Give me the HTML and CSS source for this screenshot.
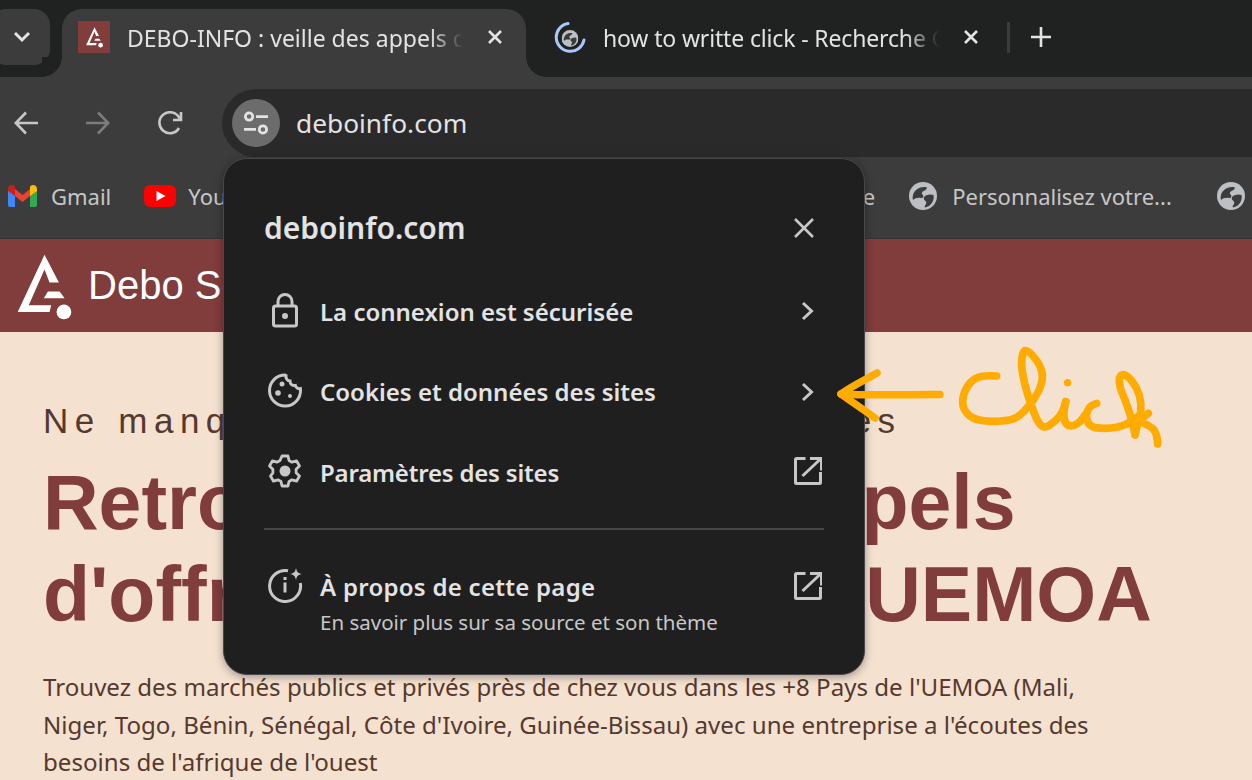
FILE: index.html
```html
<!DOCTYPE html>
<html lang="fr">
<head>
  <meta charset="UTF-8">
  <meta name="viewport" content="width=device-width, initial-scale=1.0">
  <title>DEBO-INFO</title>
  <link rel="stylesheet" href="styles.css">
</head>
<body>
<svg class="sprite" width="0" height="0">
  <symbol id="globe" viewBox="0 0 28 28">
    <circle cx="14" cy="14" r="14" fill="#bcbfc4"/>
    <path d="M18 5.500C12 4 6 7 4 13c-.5 2-.5 3.500 0 5 2-2 5-2.500 8-2 2.500 0 3-2 1.500-3.500-1.500-1.500 0-3 2-4 1.500-.5 2.500-2 2.500-3.500z" fill="#3c3c3c"/>
    <path d="M24.500 13c-2-1-5-.5-7.500.5-2.500 1-3 3.500-1 5 2 1.500 1.500 3.500 0 5-.5.500-.5 1.500 0 2 3-.5 6-2.500 7.500-5.500 1.200-2.500 1.500-4.500 1-7z" fill="#3c3c3c"/>
  </symbol>
  <symbol id="ext" viewBox="0 0 28 28">
    <path d="M11.500 1.500H2.500a1 1 0 0 0-1 1v23a1 1 0 0 0 1 1h23a1 1 0 0 0 1-1V15" fill="none" stroke="#c7c7c7" stroke-width="3"/>
    <path d="M16 1.500h11.500V13.500M27 1.500L8.500 19" fill="none" stroke="#c7c7c7" stroke-width="3"/>
  </symbol>
  <symbol id="chev" viewBox="0 0 13 20">
    <path d="M2 2l8.500 8L2 18" fill="none" stroke="#c7c7c7" stroke-width="3"/>
  </symbol>
  <symbol id="logo" viewBox="50 40 170 200">
    <path d="M135 42L178 125H150L135 86L88 193H155L150 213H55Z" fill="#fff"/>
    <path d="M145 152H180L195 172H133Z" fill="#fff"/>
    <circle cx="193" cy="213" r="22" fill="#fff"/>
  </symbol>
</svg>

<div class="tabstrip">
  <div class="tab-search">
    <svg width="18" height="12" viewBox="0 0 18 12"><path d="M2 2l7 7 7-7" fill="none" stroke="#e3e3e3" stroke-width="3"/></svg>
  </div>
  <div class="tab tab-active">
    <div class="favicon"><svg width="19" height="21"><use href="#logo"/></svg></div>
    <span class="tab-title">DEBO-INFO : veille des appels d'offres</span>
    <svg class="tab-close" width="16" height="16" viewBox="0 0 16 16"><path d="M2 2l12 12M14 2L2 14" stroke="#e3e3e3" stroke-width="2.600"/></svg>
  </div>
  <div class="tab tab-other">
    <svg class="spinner" width="32" height="32" viewBox="0 0 32 32">
      <path d="M14 2.500A14 14 0 1 0 30 19" fill="none" stroke="#a8c7fa" stroke-width="3" stroke-linecap="round"/>
      <svg x="7.500" y="9" width="17" height="17"><use href="#globe"/></svg>
    </svg>
    <span class="tab-title">how to writte click - Recherche Google</span>
    <svg class="tab-close" width="16" height="16" viewBox="0 0 16 16"><path d="M2 2l12 12M14 2L2 14" stroke="#e3e3e3" stroke-width="2.600"/></svg>
  </div>
  <div class="tab-sep"></div>
  <svg class="tab-new" width="22" height="22" viewBox="0 0 22 22"><path d="M11 1v20M1 11h20" stroke="#e3e3e3" stroke-width="2.600"/></svg>
</div>

<div class="toolbar">
  <div class="nav">
    <svg width="24" height="24" viewBox="0 0 24 24"><path d="M24 12H2M12 1.500L1.800 12 12 22.500" fill="none" stroke="#c7c7c7" stroke-width="2.600"/></svg>
    <svg width="24" height="24" viewBox="0 0 24 24"><path d="M0 12h22M12 1.500L22.200 12 12 22.500" fill="none" stroke="#7c7c7c" stroke-width="2.600"/></svg>
    <svg width="26" height="24" viewBox="0 0 26 24"><path d="M21 17a10.500 10.500 0 1 1 .5-9.500M23 1v8h-8" fill="none" stroke="#c7c7c7" stroke-width="2.600"/></svg>
  </div>
  <div class="omnibox">
    <div class="site-info">
      <svg width="24" height="24" viewBox="0 0 26 26">
        <circle cx="5.500" cy="6" r="4" fill="none" stroke="#e3e3e3" stroke-width="3"/>
        <path d="M13 6h13M0 20h13" stroke="#e3e3e3" stroke-width="3"/>
        <circle cx="20.500" cy="20" r="4" fill="none" stroke="#e3e3e3" stroke-width="3"/>
      </svg>
    </div>
    <span class="url">deboinfo.com</span>
  </div>
</div>

<div class="bookmarks">
  <div class="bookmark bm-gmail">
    <svg width="29" height="22" viewBox="0 0 29 22">
      <path d="M0 4v16a2 2 0 0 0 2 2h5V10z" fill="#4285f4"/>
      <path d="M29 4v16a2 2 0 0 1-2 2h-5V10z" fill="#34a853"/>
      <path d="M7 4l7.500 6L22 4v7l-7.500 6L7 11z" fill="#ea4335"/>
      <path d="M0 4c0-3.500 4-5 6.500-3L7 1.500V11L0 6z" fill="#c5221f"/>
      <path d="M29 4c0-3.500-4-5-6.500-3L22 1.500V11l7-5z" fill="#fbbc04"/>
    </svg>
    <span>Gmail</span>
  </div>
  <div class="bookmark bm-youtube">
    <svg width="32" height="22" viewBox="0 0 32 22">
      <rect width="32" height="22" rx="6" fill="#ff0000"/>
      <path d="M12.500 6l9 5-9 5z" fill="#fff"/>
    </svg>
    <span>YouTube</span>
  </div>
  <div class="bookmark bm-middle">
    <span>Maps et plus encore</span>
  </div>
  <div class="bookmark bm-perso">
    <svg width="28" height="28"><use href="#globe"/></svg>
    <span>Personnalisez votre...</span>
  </div>
  <div class="bookmark bm-last">
    <svg width="28" height="28"><use href="#globe"/></svg>
  </div>
</div>

<header class="site-header">
  <svg class="site-logo" width="57" height="67"><use href="#logo"/></svg>
  <span class="site-name">Debo Sourcing</span>
</header>

<main class="hero">
  <p class="eyebrow">Ne manquez plus aucune des annonces</p>
  <h1 class="hero-title"><span class="line-one">Retrouvez tous vos appels</span><br><span class="line-two">d'offres dans la zone UEMOA</span></h1>
  <p class="hero-text">Trouvez des marchés publics et privés près de chez vous dans les +8 Pays de l'UEMOA (Mali, Niger, Togo, Bénin, Sénégal, Côte d'Ivoire, Guinée-Bissau) avec une entreprise a l'écoutes des besoins de l'afrique de l'ouest</p>
</main>

<section class="popup">
  <div class="popup-head">
    <span class="popup-host">deboinfo.com</span>
    <svg width="22" height="22" viewBox="0 0 22 22"><path d="M2 2l18 18M20 2L2 20" stroke="#c7c7c7" stroke-width="2.600"/></svg>
  </div>
  <div class="popup-row">
    <svg class="row-icon" width="36" height="36" viewBox="0 0 36 36">
      <path d="M11 15V9.500a7 7 0 0 1 14 0V15" fill="none" stroke="#c7c7c7" stroke-width="3"/>
      <rect x="6.500" y="14" width="23" height="20" rx="2" fill="none" stroke="#c7c7c7" stroke-width="3"/>
      <circle cx="18" cy="24" r="3" fill="#c7c7c7"/>
    </svg>
    <span class="row-label">La connexion est sécurisée</span>
    <svg class="row-chev" width="13" height="20"><use href="#chev"/></svg>
  </div>
  <div class="popup-row">
    <svg class="row-icon" width="36" height="36" viewBox="0 0 36 36">
      <path d="M18 3A15.500 15.500 0 1 0 33.500 18c0-.5 0-1-.1-1.500-2 .5-4.400-.5-5-3-3 .5-5.400-1.500-5.400-4.500-2.500 0-4.500-2.500-4-5.500z" fill="none" stroke="#c7c7c7" stroke-width="3"/>
      <circle cx="15" cy="12" r="2.500" fill="#c7c7c7"/>
      <circle cx="11" cy="21" r="2.800" fill="#c7c7c7"/>
      <circle cx="23" cy="24" r="2" fill="#c7c7c7"/>
    </svg>
    <span class="row-label">Cookies et données des sites</span>
    <svg class="row-chev" width="13" height="20"><use href="#chev"/></svg>
  </div>
  <div class="popup-row">
    <svg class="row-icon" width="36" height="36" viewBox="0 0 36 36">
      <path d="M15 3h6l1 4.500 3 1.700 4.500-1.400 3 5.200-3.400 3.200v3.600l3.400 3.200-3 5.200-4.500-1.400-3 1.700-1 4.500h-6l-1-4.500-3-1.700-4.500 1.400-3-5.200L5.900 19.800v-3.600L2.500 13l3-5.200L10 9.200l3-1.700z" fill="none" stroke="#c7c7c7" stroke-width="2.800" stroke-linejoin="round"/>
      <circle cx="18" cy="18" r="5.500" fill="#c7c7c7"/>
    </svg>
    <span class="row-label label-tight">Paramètres des sites</span>
    <svg class="row-ext" width="28" height="28"><use href="#ext"/></svg>
  </div>
  <div class="popup-divider"></div>
  <div class="popup-row popup-row-about">
    <svg class="row-icon" width="36" height="36" viewBox="0 0 36 36">
      <path d="M21 3.800A15.500 15.500 0 1 0 33.300 16" fill="none" stroke="#c7c7c7" stroke-width="3"/>
      <path d="M18 15.500v10M18 10v3" stroke="#c7c7c7" stroke-width="3"/>
      <path d="M29 1c.8 4 2 5.200 6 6-4 .8-5.200 2-6 6-.8-4-2-5.200-6-6 4-.8 5.200-2 6-6z" fill="#c7c7c7"/>
    </svg>
    <div class="row-text">
      <span class="row-label">À propos de cette page</span>
      <span class="row-sub">En savoir plus sur sa source et son thème</span>
    </div>
    <svg class="row-ext" width="28" height="28"><use href="#ext"/></svg>
  </div>
</section>

<svg class="scribble" width="1252" height="780" viewBox="0 0 1252 780">
  <g fill="none" stroke="#ffab00" stroke-width="7.500" stroke-linecap="round" stroke-linejoin="round">
    <path d="M940 394.500C910 394 875 396 841 394"/>
    <path d="M877 373C865 380 852 386 841 394C852 402 864 410 875 418"/>
  </g>
  <g transform="translate(950 340) scale(.3333)" fill="none" stroke="#ffab00" stroke-width="23" stroke-linecap="round" stroke-linejoin="round">
    <path d="M140 108Q95 105 77.500 115Q60 125 49 145Q38 165 38 185Q38 205 51.500 220Q65 235 87.500 240Q110 245 140 244Q170 243 187.500 237.500Q205 232 222.500 213.500Q240 195 255 172.500Q270 150 275 127.500Q280 105 272.500 85Q265 65 245 43.500Q225 22 218.500 41Q212 60 217 95Q222 130 233.500 165Q245 200 255 225Q265 250 275 257.500Q285 265 300 255Q315 245 327.500 230Q340 215 347 185"/>
    <path d="M347 185Q338 225 345 245Q352 262 372 256Q390 250 405 225"/>
    <path d="M440 190Q412 198 409 225Q408 255 435 263Q490 270 530 252L560 232"/>
    <path d="M555 285Q548 240 525 180Q505 135 508 115Q518 90 545 122Q578 165 572 215L555 285"/>
    <path d="M595 220L565 245Q600 255 612 270Q622 285 623 312"/>
    <circle cx="353" cy="128" r="11" fill="#ffab00" stroke="none"/>
  </g>
</svg>
</body>
</html>
```

FILE: styles.css
```css
html, body {
  margin: 0;
  height: 780px;
  overflow: hidden;
}
body {
  font-family: "Noto Sans", sans-serif;
  background-color: #f4e1d0;
  position: relative;
}
.sprite {
  position: absolute;
}
p, h1 {
  margin: 0;
}

/* chrome tabs */
.tabstrip {
  height: 77px;
  background: #202222;
  display: flex;
  align-items: flex-start;
  color: #e3e3e3;
  font-size: 23px;
}
.tab-search {
  width: 60px;
  height: 56px;
  margin-top: 9px;
  margin-left: -10px;
  padding-left: 4px;
  box-sizing: border-box;
  background: #3c3c3c;
  border-radius: 16px;
  display: flex;
  align-items: center;
  justify-content: center;
}
.tab {
  height: 68px;
  margin-top: 9px;
  display: flex;
  align-items: flex-start;
  box-sizing: border-box;
  padding-top: 12px;
}
.tab-active {
  position: relative;
  width: 464px;
  margin-left: 12px;
  padding-left: 16px;
  background: #3c3c3c;
  border-radius: 20px 20px 0 0;
}
.tab-active::before, .tab-active::after {
  content: "";
  position: absolute;
  bottom: 0;
  width: 20px;
  height: 20px;
}
.tab-active::before {
  left: -20px;
  background: radial-gradient(circle at 0 0, #202222 19.500px, #3c3c3c 20px);
}
.tab-active::after {
  right: -20px;
  background: radial-gradient(circle at 100% 0, #202222 19.500px, #3c3c3c 20px);
}
.favicon {
  width: 32px;
  height: 32px;
  background: #813c3c;
  display: flex;
  align-items: center;
  justify-content: center;
}
.tab-title {
  width: 336px;
  margin-left: 17px;
  line-height: 34px;
  white-space: nowrap;
  overflow: hidden;
  -webkit-mask-image: linear-gradient(to right, #000 90%, transparent 100%);
  mask-image: linear-gradient(to right, #000 90%, transparent 100%);
}
.tab-close {
  margin-left: 24px;
  margin-top: 8px;
}
.tab-other {
  padding-left: 28px;
}
.tab-other .tab-title {
  letter-spacing: -0.150px;
}
.tab-sep {
  width: 3px;
  height: 31px;
  margin-top: 22px;
  margin-left: 28px;
  background: #3c3c3c;
}
.tab-new {
  margin-top: 26px;
  margin-left: 20px;
}

/* toolbar */
.toolbar {
  height: 80px;
  background: #3c3c3c;
  display: flex;
  align-items: flex-start;
}
.nav {
  width: 222px;
  height: 80px;
  box-sizing: border-box;
  padding: 12px 0 0 14px;
  display: flex;
  align-items: center;
  gap: 48px;
  flex-shrink: 0;
}
.omnibox {
  flex: 1;
  height: 68px;
  margin-top: 12px;
  background: #2a2a2a;
  border-radius: 34px 0 0 34px;
  display: flex;
  align-items: center;
  padding-left: 10px;
}
.site-info {
  width: 48px;
  height: 48px;
  border-radius: 50%;
  background: #6c6c6c;
  display: flex;
  align-items: center;
  justify-content: center;
}
.url {
  margin-left: 16px;
  font-size: 26.300px;
  color: #e3e3e3;
}

/* bookmarks */
.bookmarks {
  height: 82px;
  box-sizing: border-box;
  background: #3c3c3c;
  border-bottom: 1px solid #333;
  display: flex;
  align-items: center;
  color: #c7c7c7;
  font-size: 22px;
  padding: 0 0 3px 8px;
  white-space: nowrap;
}
.bookmark {
  display: flex;
  align-items: center;
  gap: 14px;
  flex-shrink: 0;
}
.bm-youtube {
  width: 150px;
  margin-left: 33px;
  gap: 12px;
}
.bm-middle {
  width: 551px;
  margin-left: 30px;
  justify-content: flex-end;
}
.bm-perso {
  margin-left: 34px;
  gap: 15px;
}
.bm-last {
  margin-left: 45px;
}

/* page behind the popup */
.site-header {
  height: 93px;
  background: #813c3c;
  display: flex;
  align-items: center;
  padding-left: 16px;
  color: #fff;
  font-family: "Liberation Sans", sans-serif;
  font-size: 40px;
}
.site-logo {
  margin-top: 3px;
}
.site-name {
  margin-left: 15px;
}
.hero {
  padding: 66px 140px 0 43px;
  font-family: "Liberation Sans", sans-serif;
}
.eyebrow {
  font-size: 35px;
  line-height: 46px;
  letter-spacing: 6.500px;
  word-spacing: 1.300px;
  color: #55392f;
  white-space: nowrap;
}
.hero-title {
  margin-top: 12px;
  font-size: 77px;
  line-height: 92px;
  color: #813c3c;
  white-space: nowrap;
}
.line-one {
  word-spacing: -1px;
}
.line-two {
  word-spacing: 9.500px;
}
.hero-text {
  margin-top: 28px;
  font-family: "Noto Sans", sans-serif;
  font-size: 24.100px;
  line-height: 37.500px;
  color: #55392f;
}

/* site info popup */
.popup {
  position: absolute;
  left: 223px;
  top: 158px;
  width: 642px;
  height: 517px;
  box-sizing: border-box;
  padding: 0 40px;
  background: #1f1f1f;
  border: 1px solid #47474c;
  border-radius: 24px;
  box-shadow: 0 2px 8px rgba(0,0,0,0.35);
  color: #e3e3e3;
}
.popup-head {
  height: 69px;
  padding-top: 34px;
  margin-bottom: 9px;
  display: flex;
  align-items: center;
  justify-content: space-between;
  padding-right: 9px;
}
.popup-host {
  font-size: 30px;
  font-weight: 600;
}
.popup-row {
  height: 80.500px;
  display: flex;
  align-items: center;
}
.row-icon {
  flex-shrink: 0;
  margin: 0 0 3px 3px;
}
.row-label {
  margin-left: 17px;
  font-size: 24px;
  font-weight: 600;
  flex: 1;
}
.label-tight {
  letter-spacing: -0.200px;
}
.row-chev {
  flex-shrink: 0;
  margin-right: 10px;
}
.row-ext {
  flex-shrink: 0;
  margin-right: 2px;
  margin-bottom: 2px;
}
.popup-divider {
  height: 2px;
  background: #47474a;
  margin-top: 15px;
}
.popup-row-about {
  height: 144px;
  box-sizing: border-box;
  padding-top: 40px;
  align-items: flex-start;
}
.popup-row-about .row-icon {
  margin-top: -3px;
}
.popup-row-about .row-ext {
  margin-top: 2px;
}
.row-text {
  flex: 1;
  margin-left: 17px;
  display: flex;
  flex-direction: column;
}
.row-text .row-label {
  margin-left: 0;
  letter-spacing: 0.270px;
}
.row-sub {
  font-size: 20.500px;
  color: #c7c7c7;
  margin-top: 5px;
}

/* hand drawn note on top of the shot */
.scribble {
  position: absolute;
  left: 0;
  top: 0;
  pointer-events: none;
}
```
